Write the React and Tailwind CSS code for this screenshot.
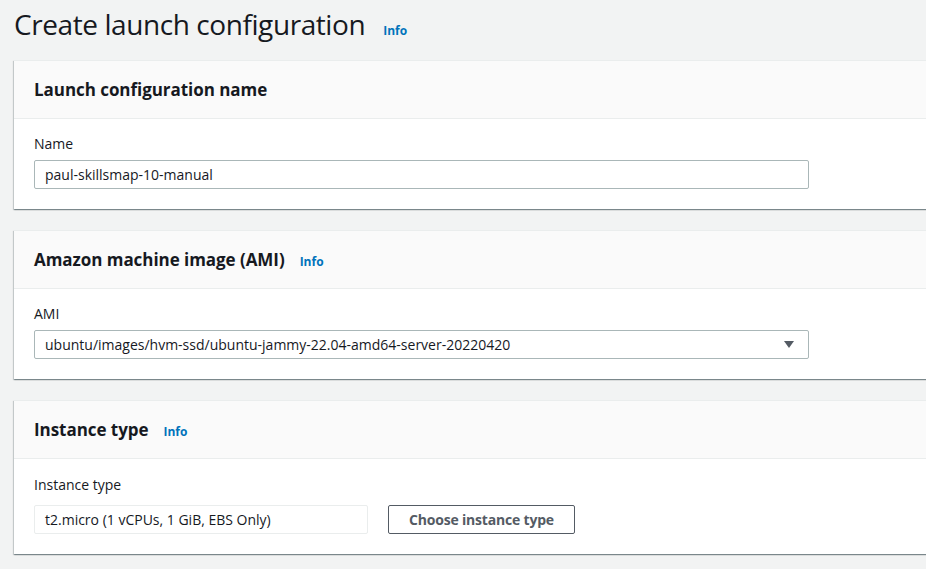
import React from "react";

const font = { fontFamily: '"Open Sans", "Noto Sans", Arial, sans-serif' };

function Info({ className = "" }) {
  return (
    <span className={"text-[12px] font-bold text-[#0073bb] leading-none " + className}>Info</span>
  );
}

function Card({ title, info, children }) {
  return (
    <section className="w-[940px] bg-white border-t border-[#eaeded] shadow-[0_1px_1px_0_rgba(0,28,36,0.3),1px_1px_1px_0_rgba(0,28,36,0.15),-1px_1px_1px_0_rgba(0,28,36,0.15)]">
      <div className="h-[58px] bg-[#fafafa] border-b border-[#eaeded] px-5 flex items-center gap-[15px]">
        <h2 className="text-[17px] font-bold text-[#16191f] leading-[22px] tracking-[-0.05px]">{title}</h2>
        {info && <Info className="mt-[4px]" />}
      </div>
      <div className="px-5 pt-[15px] pb-[20px]">{children}</div>
    </section>
  );
}

export default function App() {
  return (
    <div style={font} className="w-[926px] h-[569px] overflow-hidden bg-[#f2f3f3] text-[#16191f]">
      <div className="pl-[14px]">
        <div className="h-[60px] flex items-baseline gap-[18px] pt-[4px]">
          <h1 className="text-[28px] leading-[40px] font-normal text-[#16191f] tracking-[-0.42px]">
            Create launch configuration
          </h1>
          <Info />
        </div>
        <div className="flex flex-col gap-[21px]">
          <Card title="Launch configuration name">
            <label className="block text-[14px] leading-[20px] mb-[6px]">Name</label>
            <div className="w-[775px] h-[29px] border border-[#aab7b8] rounded-[2px] flex items-center px-[10px] text-[14px]">
              paul-skillsmap-10-manual
            </div>
          </Card>
          <Card title="Amazon machine image (AMI)" info>
            <label className="block text-[14px] leading-[20px] mb-[6px]">AMI</label>
            <div className="w-[775px] h-[29px] border border-[#aab7b8] rounded-[2px] flex items-center justify-between pl-[10px] pr-[14px] text-[14px]">
              <span>ubuntu/images/hvm-ssd/ubuntu-jammy-22.04-amd64-server-20220420</span>
              <svg width="10" height="7" viewBox="0 0 10 7">
                <path d="M0 0 H10 L5 7 Z" fill="#545b64" />
              </svg>
            </div>
          </Card>
          <Card title="Instance type" info>
            <div className="pt-[1px]">
              <label className="block text-[14px] leading-[20px] mb-[10px]">Instance type</label>
              <div className="flex items-center gap-[20px]">
                <div className="w-[334px] h-[29px] border border-[#eaeded] rounded-[2px] flex items-center px-[10px] text-[14px]">
                  t2.micro (1 vCPUs, 1 GiB, EBS Only)
                </div>
                <button className="w-[187px] h-[29px] border border-[#545b64] rounded-[2px] text-[14px] font-bold text-[#545b64] bg-white flex items-center justify-center tracking-[-0.2px]">
                  Choose instance type
                </button>
              </div>
            </div>
          </Card>
        </div>
      </div>
    </div>
  );
}
